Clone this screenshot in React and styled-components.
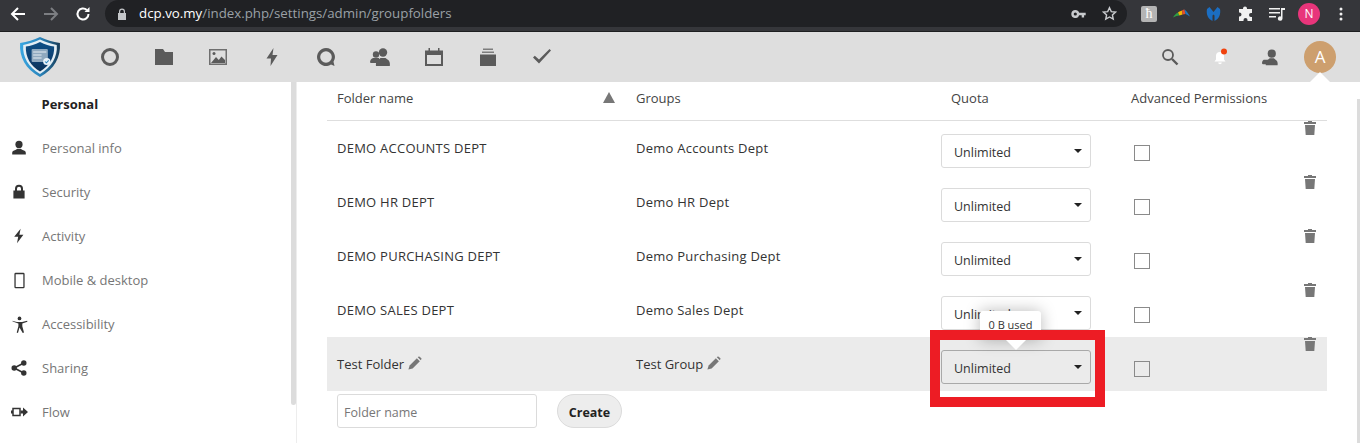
import React from "react";
import styled, { createGlobalStyle } from "styled-components";

const GlobalStyle = createGlobalStyle`
  html, body {
    margin: 0;
    padding: 0;
    height: 443px;
    overflow: hidden;
    background: #fff;
    font-family: "Open Sans", "Liberation Sans", sans-serif;
    font-size: 13px;
    color: #222;
  }
  * { box-sizing: border-box; }
`;

const Page = styled.div`
  width: 1360px;
  height: 443px;
  display: flex;
  flex-direction: column;
  overflow: hidden;
`;

/* ---------- browser toolbar ---------- */
const Browser = styled.div`
  height: 32px;
  flex: none;
  display: flex;
  background: #35363a;
  border-bottom: 1px solid #1d1e20;
`;
const NavGroup = styled.div`
  width: 105px;
  flex: none;
  display: flex;
  padding-left: 2px;
`;
const NavButton = styled.div`
  width: 32.500px;
  height: 27px;
  display: flex;
  align-items: center;
  justify-content: center;
  color: ${(p) => (p.$dim ? "#7c7e82" : "#fff")};
`;
const Omnibox = styled.div`
  width: 1022px;
  height: 27px;
  flex: none;
  display: flex;
  align-items: center;
  background: #202124;
  border-radius: 14px;
  padding: 0 2px 0 7px;
`;
const LockSlot = styled.div`
  width: 20px;
  display: flex;
  justify-content: center;
  margin-right: 7px;
  color: #c4c6c9;
`;
const Url = styled.div`
  flex: 1;
  font-size: 13.300px;
  color: #9aa0a6;
  white-space: nowrap;
  padding-bottom: 1px;
  b {
    font-weight: 400;
    color: #fff;
  }
`;
const OmniIcon = styled.div`
  width: 31px;
  display: flex;
  justify-content: center;
  color: #c8cacd;
`;
const Extensions = styled.div`
  flex: 1;
  display: flex;
  height: 27px;
  align-items: center;
  padding-left: 6px;
`;
const ExtSlot = styled.div`
  width: 32px;
  display: flex;
  justify-content: center;
  align-items: center;
  color: #f1f1f1;
`;
const ExtTile = styled.div`
  width: 16px;
  height: 16px;
  border-radius: 2px;
  background: #b4b4b4;
  color: #fff;
  font-family: "Liberation Serif", serif;
  font-size: 14px;
  line-height: 16px;
  text-align: center;
`;
const Profile = styled.div`
  width: 22px;
  height: 22px;
  border-radius: 50%;
  background: #e8357b;
  color: #fff;
  font-size: 12px;
  line-height: 22px;
  text-align: center;
`;

/* ---------- nextcloud header ---------- */
const Header = styled.header`
  height: 50px;
  flex: none;
  display: flex;
  align-items: center;
  background: #dedede;
  padding-right: 15px;
  position: relative;
`;
const LogoSlot = styled.div`
  width: 83px;
  flex: none;
  display: flex;
  justify-content: center;
  padding-right: 3px;
`;
const AppIcon = styled.div`
  width: ${(p) => p.$w || 54}px;
  height: 50px;
  flex: none;
  display: flex;
  align-items: center;
  justify-content: center;
  color: #5b5b5b;
`;
const Spacer = styled.div`
  flex: 1;
`;
const Avatar = styled.div`
  width: 32px;
  height: 32px;
  margin: 0 9px;
  border-radius: 50%;
  background: #cd9f6e;
  color: #fff;
  font-size: 17px;
  line-height: 32px;
  text-align: center;
`;
const Caret = styled.div`
  position: absolute;
  right: 30px;
  bottom: 0;
  width: 0;
  height: 0;
  border-left: 10px solid transparent;
  border-right: 10px solid transparent;
  border-bottom: 10px solid #fff;
`;

/* ---------- body ---------- */
const Body = styled.div`
  flex: 1;
  display: flex;
  min-height: 0;
`;
const Sidebar = styled.nav`
  width: 297px;
  flex: none;
  position: relative;
  overflow: hidden;
  border-right: 1px solid #ededed;
`;
const SideThumb = styled.div`
  position: absolute;
  top: 0;
  right: 0;
  width: 5px;
  height: 323px;
  background: #dcdcdc;
  border-radius: 0 0 3px 3px;
`;
const SideCaption = styled.div`
  height: 44px;
  line-height: 44px;
  padding-left: 41.500px;
  font-weight: 700;
  color: #222;
`;
const SideItem = styled.div`
  height: 44px;
  display: flex;
  align-items: center;
  color: #767676;
`;
const SideIcon = styled.div`
  width: 42px;
  flex: none;
  display: flex;
  justify-content: center;
  padding-right: 4px;
  color: #333;
`;

const Content = styled.main`
  flex: 1;
  position: relative;
  padding: 0 33px 0 30px;
  overflow: hidden;
`;
const PageScroll = styled.div`
  position: absolute;
  right: 0;
  top: 17px;
  bottom: 0;
  width: 3px;
  background: #dcdcdc;
`;
const columns = "309px 305px 190px 172px 1fr";
const HeadRow = styled.div`
  height: 39px;
  display: grid;
  grid-template-columns: ${columns};
  align-items: center;
  border-bottom: 1px solid #dedede;
  color: #444;
`;
const HeadCell = styled.div`
  padding-left: ${(p) => p.$pad ?? 0}px;
  padding-bottom: 7px;
  display: flex;
  align-items: center;
  justify-content: space-between;
`;
const SortArrow = styled.span`
  width: 0;
  height: 0;
  margin-right: 21px;
  border-left: 6px solid transparent;
  border-right: 6px solid transparent;
  border-bottom: 11px solid #777;
`;
const Row = styled.div`
  height: 54px;
  display: grid;
  grid-template-columns: ${columns};
  background: ${(p) => (p.$active ? "#ebebeb" : "transparent")};
  color: #333;
`;
const NameCell = styled.div`
  padding: 18px 0 0 ${(p) => p.$pad ?? 10}px;
  line-height: 18px;
  letter-spacing: ${(p) => (p.$tight ? "0" : "0.25px")};
  display: flex;
  align-items: flex-start;
`;
const Pencil = styled.span`
  margin-left: 3px;
  margin-top: 1px;
  color: #777;
  display: flex;
`;
const QuotaCell = styled.div`
  padding-top: 13px;
`;
const SelectWrap = styled.div`
  position: relative;
  width: 150px;
`;
const Select = styled.div`
  width: 150px;
  height: 34px;
  display: flex;
  align-items: center;
  justify-content: space-between;
  padding: 2px 8px 0 12px;
  border: 1px solid ${(p) => (p.$active ? "#a9a9a9" : "#dbdbdb")};
  border-radius: 3px;
  background: ${(p) => (p.$active ? "transparent" : "#fff")};
  color: #333;
  font-size: 12.500px;
`;
const SelectCaret = styled.span`
  width: 0;
  height: 0;
  margin-top: -3px;
  border-left: 4.500px solid transparent;
  border-right: 4.500px solid transparent;
  border-top: 4.500px solid #222;
`;
const Tooltip = styled.div`
  position: absolute;
  left: 39px;
  top: -39px;
  width: 61px;
  height: 29px;
  padding-top: 6px;
  background: #fff;
  border-radius: 3px;
  box-shadow: 0 0 16px rgba(0, 0, 0, 0.28);
  color: #333;
  font-size: 11px;
  line-height: 16px;
  text-align: center;
`;
const TooltipArrow = styled.div`
  position: absolute;
  left: 65px;
  top: -10px;
  width: 0;
  height: 0;
  border-left: 10px solid transparent;
  border-right: 10px solid transparent;
  border-top: 10px solid #fff;
`;
const Highlight = styled.div`
  position: absolute;
  left: -11px;
  top: -20px;
  width: 175px;
  height: 77px;
  border: 10px solid #ed1c24;
  pointer-events: none;
`;
const CheckCell = styled.div`
  padding: 24px 0 0 3px;
`;
const Check = styled.div`
  width: 16px;
  height: 16px;
  border: 1px solid #8a8a8a;
  background: ${(p) => (p.$active ? "transparent" : "#fff")};
`;
const TrashCell = styled.div`
  padding: 17px 0 0 -1px;
  color: #777;
  display: flex;
`;
const CreateForm = styled.form`
  display: flex;
  gap: 20px;
  margin: 3px 0 0 10px;
`;
const NameInput = styled.input`
  width: 200px;
  height: 34px;
  padding: 2px 6px 0;
  border: 1px solid #dbdbdb;
  border-radius: 3px;
  font: inherit;
  font-size: 12.500px;
  &::placeholder {
    color: #777;
    opacity: 1;
  }
`;
const CreateButton = styled.button`
  width: 65px;
  height: 34px;
  padding: 2px 0 0;
  border: 1px solid #dbdbdb;
  border-radius: 17px;
  background: #ededed;
  color: #222;
  font: inherit;
  font-size: 12.500px;
  font-weight: 700;
`;

/* ---------- icons ---------- */
const Svg = ({ size = 20, box = 20, children }) => (
  <svg width={size} height={size} viewBox={`0 0 ${box} ${box}`} fill="currentColor">
    {children}
  </svg>
);

const ShieldLogo = () => (
  <svg width="44" height="42" viewBox="0 0 42 42" preserveAspectRatio="none">
    <defs>
      <linearGradient id="shieldFill" x1="0" y1="0" x2="0" y2="1">
        <stop offset="0" stopColor="#0e4f86" />
        <stop offset="0.6" stopColor="#0d3f70" />
        <stop offset="1" stopColor="#0a3157" />
      </linearGradient>
      <linearGradient id="rimFill" x1="0" y1="0" x2="1" y2="0">
        <stop offset="0" stopColor="#39a7e2" />
        <stop offset="0.5" stopColor="#2b86bd" />
        <stop offset="1" stopColor="#173a55" />
      </linearGradient>
    </defs>
    <path d="M21 1 C27 4 33 6 40 7 C41 21 35 33 21 41 C7 33 1 21 2 7 C9 6 15 4 21 1Z" fill="url(#rimFill)" />
    <path d="M21 3.500 C26 6 32 8 37 9 C38 21 32 31 21 38 C10 31 4 21 5 9 C10 8 16 6 21 3.500Z" fill="#e4eef4" />
    <path d="M21 6 C26 8.500 30 10 34.500 10.500 C35 21 30 30 21 35.500 C12 30 7 21 7.500 10.500 C12 10 16 8.500 21 6Z" fill="url(#shieldFill)" />
    <rect x="13" y="13" width="15.500" height="13" rx="1" fill="#8fa9bf" />
    <path d="M14.500 16h12.500M14.500 19h8M14.500 22h8" stroke="#e6eef4" strokeWidth="1.200" />
    <circle cx="27.500" cy="25.500" r="3.500" fill="#e8f2f8" />
    <path d="M25.800 25.500l1.300 1.300 2.200-2.400" stroke="#2b86bd" strokeWidth="1" fill="none" />
  </svg>
);

const appIcons = [
  <Svg key="dash"><circle cx="10" cy="10" r="7.500" fill="none" stroke="currentColor" strokeWidth="3" /></Svg>,
  <Svg key="files"><path d="M1 2h8l2 3h8v13H1z" /></Svg>,
  <Svg key="photos"><path fill="#6f6f6f" fillRule="evenodd" d="M1 2h18v16H1zM2.500 3.500v13h15v-13z" /><path d="M3 16l5-6 2.800 3 2.700-3.500L17 13v3z" /><circle cx="6" cy="6.500" r="1.500" /></Svg>,
  <Svg key="activity"><path d="M11.500 1 L4.500 11.500 H9 L8.500 19 L15.500 8 H10.500z" /></Svg>,
  <Svg key="talk"><path fillRule="evenodd" d="M10 1a9 9 0 1 0 5 16.500l3.500 1.500-1-4.200A9 9 0 0 0 10 1zm0 3.200a5.800 5.800 0 1 1 0 11.600 5.800 5.800 0 0 1 0-11.600z" /></Svg>,
  <Svg key="contacts">
    <circle cx="13" cy="5.500" r="4.200" />
    <path d="M6 19c-.5-3 .5-5.500 2.500-6.500L10.500 11h5l2 1.500c2 1 2.700 3.500 2.300 6.500z" />
    <circle cx="6" cy="7.500" r="3.200" />
    <path d="M0 15.500c0-2.500 1-3.500 3-4.500h6v5H1z" />
  </Svg>,
  <Svg key="calendar"><path fillRule="evenodd" d="M4.500 1h1.500v2.500h8V1h1.500v2.500H19V19H1V3.500h3.500zM3 8v9h14V8z" /></Svg>,
  <Svg key="deck"><path fill="#7d7d7d" d="M5 1.500h10v1.500H5zM4 4.500h12V6H4z" /><path d="M2 7.500h16V19H2z" /></Svg>,
  <Svg key="tasks"><path d="M1 10.500 L2.800 8.800 L7 12.500 L17.500 2 L19 3.500 L7 16.500z" /></Svg>,
];

const sideItems = [
  ["Personal info", <Svg key="a" size={16}><circle cx="10" cy="5.500" r="4.500" /><path d="M1.500 18v-2c0-2 1.500-3 4-3.500L8 11h4l2.500 1.500c2.500.5 4 1.500 4 3.500v2z" /></Svg>],
  ["Security", <Svg key="b" size={16}><path fillRule="evenodd" d="M5 8V6a5 5 0 0 1 10 0v2h2v10H3V8zm2.500 0h5V6a2.500 2.500 0 0 0-5 0z" /></Svg>],
  ["Activity", <Svg key="c" size={16}><path d="M12 1 L4 11 H9 L7.500 19 L15.500 8.500 H10.500z" /></Svg>],
  ["Mobile & desktop", <Svg key="d" size={17}><path fillRule="evenodd" d="M5.500 1h9A1.500 1.500 0 0 1 16 2.500v15a1.500 1.500 0 0 1-1.500 1.500h-9A1.500 1.500 0 0 1 4 17.500v-15A1.500 1.500 0 0 1 5.500 1zM5.500 2.500v15h9v-15z" /></Svg>],
  ["Accessibility", <Svg key="e" size={17}><circle cx="10" cy="2.800" r="2.200" /><path d="M1 5.500l6 1.500h6l6-1.500.3 1.300-6 2V12l2 7.500-1.500.5L10 13.500 8.200 20l-1.500-.5 2-7.500V8.800l-6-2z" /></Svg>],
  ["Sharing", <Svg key="f" size={16}><circle cx="4" cy="10" r="3.400" /><circle cx="16" cy="3.800" r="3.400" /><circle cx="16" cy="16.200" r="3.400" /><path d="M4 10 16 3.800M4 10l12 6.200" stroke="currentColor" strokeWidth="2" /></Svg>],
  ["Flow", <svg key="g" width="17" height="14" viewBox="0 0 17 14" fill="currentColor"><path d="M2 3.500h7v7H2z" fill="none" stroke="currentColor" strokeWidth="1.500" /><path d="M0 5.500h2v3H0z" /><path d="M9.500 5.500h2.500V2.500L17 7l-5 4.500v-3H9.500z" /></svg>],
];

const PencilIcon = () => (
  <Svg size={15} box={16}>
    <path d="M1.500 14.500 L2.800 10 L10.500 2.300 L13.700 5.500 L6 13.200z" />
    <path d="M11.500 1.300 L12.500 .6 Q13 .3 13.500 .7 L15.300 2.500 Q15.700 3 15.300 3.500 L14.700 4.500z" />
  </Svg>
);

const TrashIcon = () => (
  <Svg size={14} box={14}>
    <path d="M5 0h4v1h4v2H1V1h4zM2 4h10l-.7 10H2.700z" />
  </Svg>
);

const folders = [
  { name: "DEMO ACCOUNTS DEPT", group: "Demo Accounts Dept" },
  { name: "DEMO HR DEPT", group: "Demo HR Dept" },
  { name: "DEMO PURCHASING DEPT", group: "Demo Purchasing Dept" },
  { name: "DEMO SALES DEPT", group: "Demo Sales Dept" },
  { name: "Test Folder", group: "Test Group", active: true },
];

export default function App() {
  return (
    <Page>
      <GlobalStyle />
      <Browser>
        <NavGroup>
          <NavButton>
            <svg width="16" height="16" viewBox="0 0 16 16" fill="none" stroke="currentColor" strokeWidth="2"><path d="M15 8H2M8 2 2 8l6 6" /></svg>
          </NavButton>
          <NavButton $dim>
            <svg width="16" height="16" viewBox="0 0 16 16" fill="none" stroke="currentColor" strokeWidth="2"><path d="M1 8h13M8 2l6 6-6 6" /></svg>
          </NavButton>
          <NavButton>
            <svg width="16" height="16" viewBox="0 0 16 16" fill="none" stroke="currentColor" strokeWidth="2"><path d="M13.500 8A5.500 5.500 0 1 1 11.800 4" /><path d="M14.500 1v5h-5z" fill="currentColor" stroke="none" /></svg>
          </NavButton>
        </NavGroup>
        <Omnibox>
          <LockSlot>
            <svg width="10" height="12" viewBox="0 0 10 12" fill="currentColor"><path fillRule="evenodd" d="M2 5V3.500a3 3 0 0 1 6 0V5h1v7H1V5zm1.200 0h3.600V3.500a1.800 1.800 0 0 0-3.600 0z" /></svg>
          </LockSlot>
          <Url><b>dcp.vo.my</b>/index.php/settings/admin/groupfolders</Url>
          <OmniIcon>
            <svg width="15" height="8" viewBox="0 0 18 10" fill="currentColor"><path fillRule="evenodd" d="M5 0a5 5 0 0 1 4.800 3.500H18V6.500h-2V9.500h-3V6.500H9.800A5 5 0 1 1 5 0zm0 3a2 2 0 1 0 0 4 2 2 0 0 0 0-4z" /></svg>
          </OmniIcon>
          <OmniIcon>
            <svg width="15" height="15" viewBox="0 0 16 16" fill="none" stroke="currentColor" strokeWidth="1.500"><path d="M8 1.800l1.900 4.200 4.500.5-3.300 3 .9 4.500L8 11.700 4 14l.9-4.500-3.300-3 4.500-.5z" /></svg>
          </OmniIcon>
        </Omnibox>
        <Extensions>
          <ExtSlot><ExtTile>ħ</ExtTile></ExtSlot>
          <ExtSlot>
            <svg width="17" height="9" viewBox="0 0 17 9" strokeWidth="0">
              <path d="M0 8.500 C1.500 6 3 4.500 5 3.500L6.500 6.500C4.500 6.500 2.500 7.200 0 8.500Z" fill="#2f9e44" />
              <path d="M5 3.500C6.500 2.500 7.500 2 9 1.500L9.500 5.500 6.500 6.500z" fill="#f2b705" />
              <path d="M9 1.500C10 .8 11 .5 11.500 .6L12.500 5 9.500 5.500z" fill="#e2502b" />
              <path d="M11.500 .6C13.500 2 15.500 5 17 7.500 15 6.200 14 5.500 12.500 5z" fill="#1b76c2" />
            </svg>
          </ExtSlot>
          <ExtSlot>
            <svg width="15" height="14" viewBox="0 0 15 14" fill="#1b6ec2"><path d="M1 2 3.500 0 7.500 5 11.500 0 14 2C15 7 13 12 8.500 14V8.500L7.500 7.500 6.500 8.500V14C2 12 0 7 1 2Z" /></svg>
          </ExtSlot>
          <ExtSlot>
            <svg width="15" height="15" viewBox="0 0 15 15" fill="currentColor"><path d="M5 2.500a2 2 0 0 1 4 0V3h5v4h-1a2 2 0 0 0 0 4h1v4H9.500v-1a2 2 0 0 0-4 0v1H1v-4.500h.5a2 2 0 0 0 0-4H1V3h4z" /></svg>
          </ExtSlot>
          <ExtSlot>
            <svg width="16" height="14" viewBox="0 0 16 14" fill="currentColor"><path d="M0 1h11v1.500H0zM0 5h11v1.500H0zM0 9h7v1.500H0z" /><path d="M12 1h4v2h-2.500v8.500a2.300 2.300 0 1 1-1.500-2.100z" /></svg>
          </ExtSlot>
          <ExtSlot><Profile>N</Profile></ExtSlot>
          <ExtSlot>
            <svg width="4" height="14" viewBox="0 0 4 14" fill="currentColor"><circle cx="2" cy="2" r="1.500" /><circle cx="2" cy="7" r="1.500" /><circle cx="2" cy="12" r="1.500" /></svg>
          </ExtSlot>
        </Extensions>
      </Browser>

      <Header>
        <LogoSlot><ShieldLogo /></LogoSlot>
        {appIcons.map((icon) => (
          <AppIcon key={icon.key}>{icon}</AppIcon>
        ))}
        <Spacer />
        <AppIcon $w={50}>
          <svg width="18" height="18" viewBox="0 0 18 18" fill="none" stroke="currentColor"><circle cx="7" cy="7" r="5" strokeWidth="1.800" /><path d="M11 11l5.500 5.500" strokeWidth="2.400" /></svg>
        </AppIcon>
        <AppIcon $w={50}>
          <svg width="20" height="20" viewBox="0 0 20 20"><path d="M10 5a4 4 0 0 1 4 4v3.500l1.500 2H4.500l1.500-2V9a4 4 0 0 1 4-4z" fill="#fff" /><path d="M8.200 15.500h3.600a1.800 1.800 0 0 1-3.600 0z" fill="#fff" /><circle cx="14" cy="4.500" r="3" fill="#f0420e" /></svg>
        </AppIcon>
        <AppIcon $w={50}>
          <Svg size={17}>
            <circle cx="11.500" cy="5.500" r="4.800" />
            <path d="M4.500 19c-.5-3 .5-5.500 2.500-6.500l2-1.500h5l2 1.500c2 1 2.800 3.500 2.300 6.500z" />
            <path d="M0 17c0-2 .5-3.500 2-4.500h5.500v5.500H1z" />
          </Svg>
        </AppIcon>
        <Avatar>A</Avatar>
        <Caret />
      </Header>

      <Body>
        <Sidebar>
          <SideThumb />
          <SideCaption>Personal</SideCaption>
          {sideItems.map(([label, icon]) => (
            <SideItem key={label}>
              <SideIcon>{icon}</SideIcon>
              {label}
            </SideItem>
          ))}
        </Sidebar>

        <Content>
          <PageScroll />
          <HeadRow>
            <HeadCell $pad={10}>Folder name<SortArrow /></HeadCell>
            <HeadCell>Groups</HeadCell>
            <HeadCell $pad={10}>Quota</HeadCell>
            <HeadCell>Advanced Permissions</HeadCell>
            <HeadCell />
          </HeadRow>
          {folders.map((f) => (
            <Row key={f.name} $active={f.active}>
              <NameCell $tight={f.active}>
                {f.name}
                {f.active && <Pencil><PencilIcon /></Pencil>}
              </NameCell>
              <NameCell $pad={0} $tight={f.active}>
                {f.group}
                {f.active && <Pencil><PencilIcon /></Pencil>}
              </NameCell>
              <QuotaCell>
                <SelectWrap>
                  <Select $active={f.active}>
                    Unlimited
                    <SelectCaret />
                  </Select>
                  {f.active && (
                    <>
                      <Tooltip>0 B used</Tooltip>
                      <TooltipArrow />
                      <Highlight />
                    </>
                  )}
                </SelectWrap>
              </QuotaCell>
              <CheckCell><Check $active={f.active} /></CheckCell>
              <TrashCell><TrashIcon /></TrashCell>
            </Row>
          ))}
          <CreateForm onSubmit={(e) => e.preventDefault()}>
            <NameInput placeholder="Folder name" />
            <CreateButton>Create</CreateButton>
          </CreateForm>
        </Content>
      </Body>
    </Page>
  );
}
